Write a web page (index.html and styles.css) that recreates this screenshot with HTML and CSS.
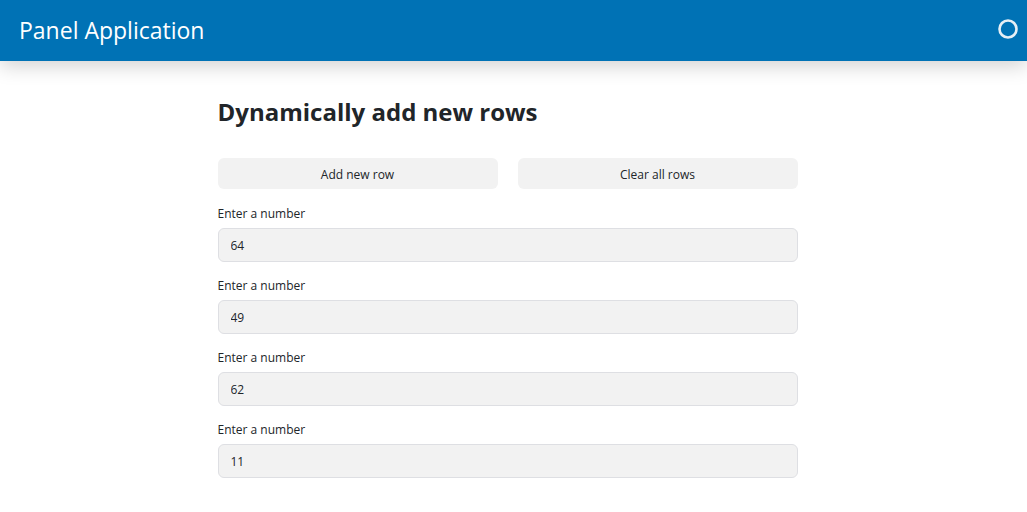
FILE: index.html
```html
<!DOCTYPE html>
<html lang="en">
<head>
<meta charset="utf-8">
<meta name="viewport" content="width=device-width, initial-scale=1">
<title>Panel Application</title>
<link rel="stylesheet" href="styles.css">
</head>
<body>
<header class="header">
  <a class="title" href="#">Panel Application</a>
  <svg class="busy" viewBox="0 0 20 20" role="img" aria-label="Idle"><circle cx="10" cy="9" r="8.5"/></svg>
</header>
<main class="main">
  <h1 class="heading">Dynamically add new rows</h1>
  <div class="actions">
    <button class="button" type="button">Add new row</button>
    <button class="button" type="button">Clear all rows</button>
  </div>
  <form class="rows">
    <div class="row"><label class="label" for="n1">Enter a number</label><input class="input" id="n1" type="text" inputmode="numeric" value="64"></div>
    <div class="row"><label class="label" for="n2">Enter a number</label><input class="input" id="n2" type="text" inputmode="numeric" value="49"></div>
    <div class="row"><label class="label" for="n3">Enter a number</label><input class="input" id="n3" type="text" inputmode="numeric" value="62"></div>
    <div class="row"><label class="label" for="n4">Enter a number</label><input class="input" id="n4" type="text" inputmode="numeric" value="11"></div>
  </form>
</main>
</body>
</html>
```
FILE: styles.css
```css
* { box-sizing: border-box; }
body {
  margin: 0;
  background: #fff;
  color: #212529;
  font-family: "Segoe UI", "Open Sans", "Noto Sans", sans-serif;
  font-size: 12px;
}
.header {
  display: flex;
  align-items: center;
  justify-content: space-between;
  padding: 14px 9px 15px 19px;
  background: #0072b5;
  box-shadow: 0 5px 20px rgba(0, 0, 0, 0.18);
}
.title {
  color: #fff;
  font-size: 23px;
  line-height: 32px;
  text-decoration: none;
}
.busy {
  width: 20px;
  height: 20px;
  overflow: visible;
  fill: none;
  stroke: #e6eff5;
  stroke-width: 2.6;
}
.main {
  width: 100%;
  max-width: 620px;
  margin: 0 auto;
  padding: 33px 26px 32px 14px;
}
.heading { margin: 0 0 28px; font-size: 24px; line-height: 36px; font-weight: 700; }
.actions { display: grid; grid-template-columns: 1fr 1fr; gap: 20px; }
.button {
  height: 31px;
  padding: 2px 12px 0;
  border: 0;
  border-radius: 6px;
  background: #f2f2f2;
  color: #212529;
  font: inherit;
}
.rows { display: grid; gap: 15px; margin-top: 16px; }
.row { display: grid; gap: 5px; }
.label { line-height: 18px; }
.input {
  width: 100%;
  height: 34px;
  padding: 0 12px;
  border: 1px solid #dedfe3;
  border-radius: 6px;
  background: #f2f2f2;
  color: #212529;
  font: inherit;
}
```
